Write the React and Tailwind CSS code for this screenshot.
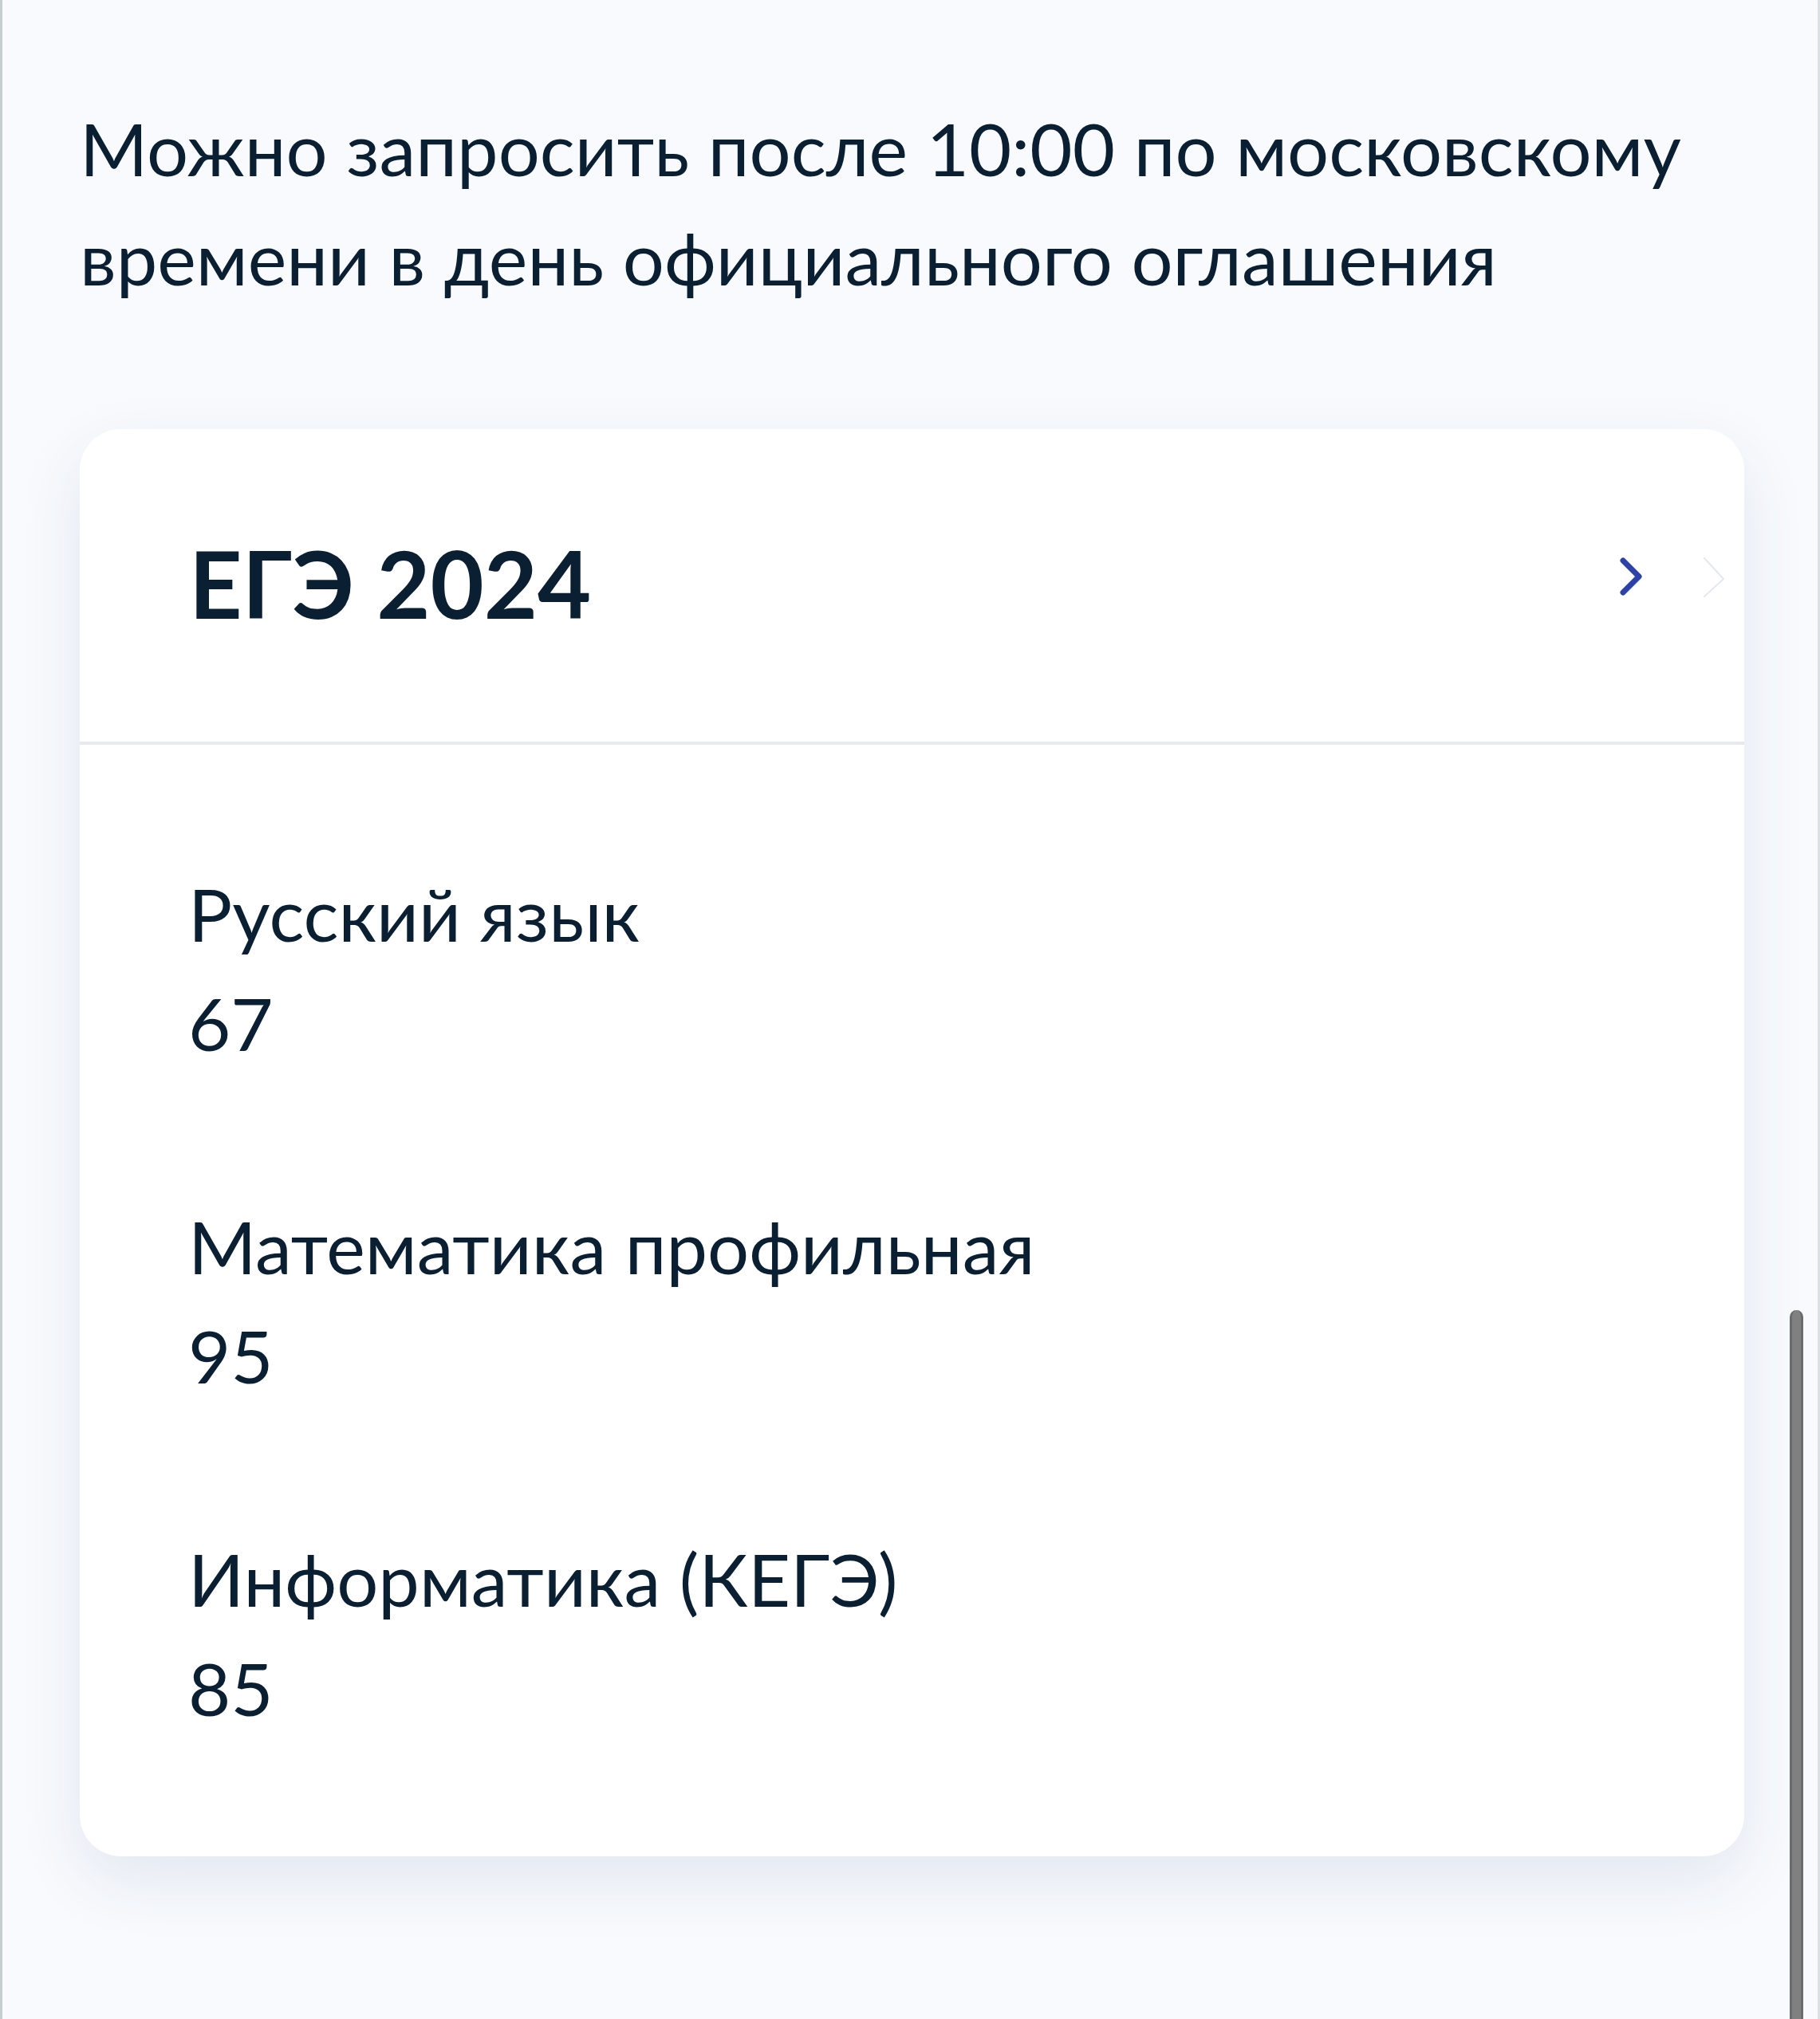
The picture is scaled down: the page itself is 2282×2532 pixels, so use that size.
const subjects = [
  { name: "Русский язык", score: 67 },
  { name: "Математика профильная", score: 95 },
  { name: "Информатика (КЕГЭ)", score: 85 },
];

export default function App() {
  return (
    <div className="relative h-[2532px] w-[2282px] overflow-hidden border-l-[3px] border-r-[3px] border-l-[#c9ccd1] border-r-[#dcdfe3] bg-[#f8fafd] font-['Lato',sans-serif] text-[#0b1f33]">
      <p className="pl-[97px] pt-[117px] text-[92px] leading-[137px]">
        Можно запросить после 10:00 по московскому
        <br />
        времени в день официального оглашения
      </p>

      <section className="ml-[97px] mt-[147px] w-[2087px] rounded-[52px] bg-white shadow-[0_30px_80px_rgba(40,70,130,0.1)]">
        <div className="flex items-center justify-between border-b-[4px] border-[#e6ebf2] pb-[140px] pl-[137px] pr-[23px] pt-[135px]">
          <h2 className="text-[116px] font-bold leading-[117px]">ЕГЭ 2024</h2>
          <div className="mb-[16px] flex items-center gap-[72px]">
            <svg width="36" height="54" viewBox="0 0 36 54" fill="none">
              <path d="M9 6 L29 26 L9 46" stroke="#2b43a6" strokeWidth="7" strokeLinecap="round" strokeLinejoin="round" />
            </svg>
            <svg width="30" height="56" viewBox="0 0 30 56" fill="none">
              <path d="M3 4 L27 30 L3 52" stroke="#e3e8f1" strokeWidth="2" strokeLinecap="round" strokeLinejoin="round" />
            </svg>
          </div>
        </div>

        <div className="flex flex-col gap-[143px] pb-[143px] pl-[136px] pt-[143px]">
          {subjects.map((s) => (
            <div key={s.name} className="text-[92px] leading-[137px]">
              <div>{s.name}</div>
              <div>{s.score}</div>
            </div>
          ))}
        </div>
      </section>

      <div className="absolute bottom-0 right-[18px] top-[1643px] w-[17px] rounded-t-full border-x-[3px] border-[#6b6b6b] bg-[#808080]" />
    </div>
  );
}
